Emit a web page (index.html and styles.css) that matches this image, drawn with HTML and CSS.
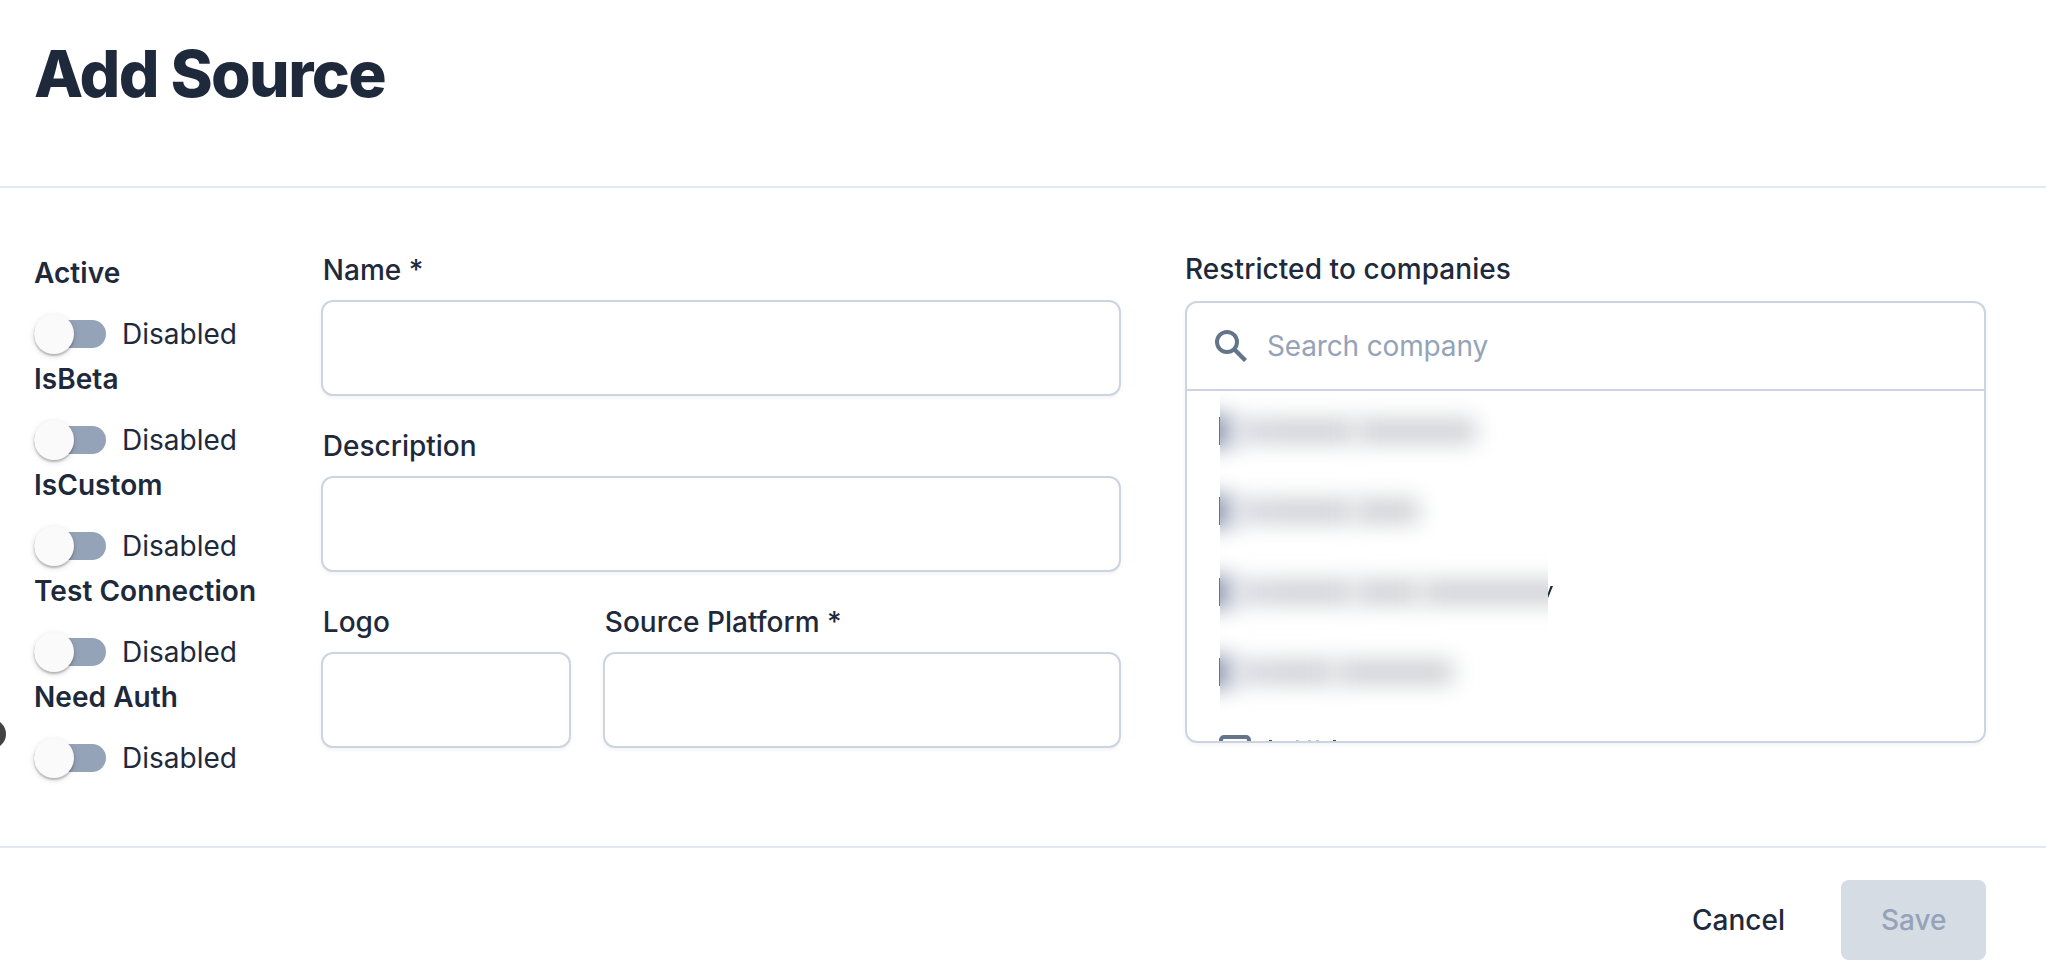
FILE: index.html
```
<!DOCTYPE html>
<html lang="en">
<head>
<meta charset="utf-8">
<title>Add Source</title>
<link rel="stylesheet" href="styles.css">
</head>
<body>
<div class="page">
  <header class="header"><h1 class="title">Add Source</h1></header>
  <main class="main">
    <section class="toggles">
      <div class="toggle-group"><div class="toggle-title">Active</div><div class="toggle"><span class="track"><span class="thumb"></span></span><span class="state">Disabled</span></div></div>
      <div class="toggle-group"><div class="toggle-title">IsBeta</div><div class="toggle"><span class="track"><span class="thumb"></span></span><span class="state">Disabled</span></div></div>
      <div class="toggle-group"><div class="toggle-title">IsCustom</div><div class="toggle"><span class="track"><span class="thumb"></span></span><span class="state">Disabled</span></div></div>
      <div class="toggle-group"><div class="toggle-title">Test Connection</div><div class="toggle"><span class="track"><span class="thumb"></span></span><span class="state">Disabled</span></div></div>
      <div class="toggle-group"><div class="toggle-title">Need Auth</div><div class="toggle"><span class="track"><span class="thumb"></span></span><span class="state">Disabled</span></div></div>
    </section>
    <section class="fields">
      <label class="field field-wide"><span class="label">Name *</span><input class="input" type="text"></label>
      <label class="field field-wide"><span class="label">Description</span><input class="input" type="text"></label>
      <label class="field"><span class="label">Logo</span><input class="input" type="text"></label>
      <label class="field"><span class="label">Source Platform *</span><input class="input" type="text"></label>
    </section>
    <section class="companies">
      <div class="companies-label">Restricted to companies</div>
      <div class="picker">
        <div class="search">
          <svg class="search-icon" viewBox="0 0 32 32"><circle cx="12" cy="12" r="10" fill="none" stroke="#64748b" stroke-width="4"/><path d="M20 20L30.500 30.500" stroke="#64748b" stroke-width="4.400"/></svg>
          <span class="placeholder">Search company</span>
        </div>
        <div class="list">
          <div class="row"><span class="edge"></span><span class="veil"><i class="box"></i><i class="word w1"></i><i class="word w2"></i></span></div>
          <div class="row"><span class="edge"></span><span class="veil"><i class="box"></i><i class="word w3"></i><i class="word w4"></i></span></div>
          <div class="row"><span class="edge"></span><span class="veil"><i class="box"></i><i class="word w3"></i><i class="word w4"></i><i class="word w5"></i></span><svg class="tail" viewBox="0 0 5 12"><path d="M0 7L2.500 0H5L0 12Z" fill="#1e293b"/></svg></div>
          <div class="row"><span class="edge"></span><span class="veil"><i class="box"></i><i class="word w6"></i><i class="word w7"></i></span></div>
          <div class="row row-cut"><span class="checkbox"></span><svg class="tops" viewBox="0 0 70 1"><path d="M2 0h3v1h-3zM66 0h3v1h-3z" fill="#3f485a"/><path d="M29 0h3v1h-3zM41 0h3v1h-3zM49 0h3v1h-3z" fill="#c0c3c9"/></svg></div>
        </div>
      </div>
    </section>
  </main>
  <footer class="footer"><button class="cancel">Cancel</button><button class="save">Save</button></footer>
  <span class="side-knob"></span>
</div>
</body>
</html>
```
FILE: styles.css
```
* { box-sizing: border-box; }
body { margin: 0; background: #fff; color: #1e293b; font-family: Inter, sans-serif; font-size: 28px; }
.page { position: relative; display: flex; flex-direction: column; height: 968px; overflow: hidden; }
.header { height: 188px; padding: 42px 34px 0; border-bottom: 2px solid #e2e8f0; }
.title { margin: 0; font-size: 64px; line-height: 64px; font-weight: 800; letter-spacing: -1.6px; }
.main { display: flex; height: 660px; padding: 0 60px 0 34px; border-bottom: 2px solid #e2e8f0; }
.toggles { width: 287px; padding-top: 61px; }
.toggle-group { height: 106px; }
.toggle-title { height: 48px; line-height: 48px; font-weight: 600; letter-spacing: 0.05px; }
.toggle { display: flex; align-items: center; gap: 16px; height: 74px; }
.track { width: 72px; height: 28px; border-radius: 14px; background: #94a3b8; }
.thumb { display: block; width: 40px; height: 40px; margin-top: -6px; border-radius: 50%; background: #fafafa; box-shadow: 0 2px 2px rgba(0,0,0,.22), 0 2px 6px rgba(0,0,0,.14); }
.state { line-height: 40px; }
.fields { display: grid; grid-template-columns: 250px 518px; column-gap: 32px; row-gap: 32px; align-content: start; width: 800px; padding-top: 64px; }
.field { display: flex; flex-direction: column; height: 144px; }
.field-wide { grid-column: span 2; }
.label { height: 48px; padding-left: 1.8px; line-height: 36px; font-weight: 500; }
.input { width: 100%; height: 96px; border: 2px solid #cbd5e1; border-radius: 12px; background: #fff; box-shadow: 0 2px 4px rgba(0,0,0,.05); }
.companies { width: 801px; margin-left: 64px; padding-top: 63px; }
.companies-label { height: 50px; line-height: 36px; font-weight: 500; letter-spacing: 0.08px; }
.picker { height: 442px; border: 2px solid #cbd5e1; border-radius: 12px; overflow: hidden; box-shadow: 0 2px 4px rgba(0,0,0,.05); }
.search { display: flex; align-items: center; gap: 20px; height: 88px; padding-left: 28px; border-bottom: 2px solid #cbd5e1; }
.search-icon { width: 32px; height: 32px; }
.placeholder { color: #94a3b8; letter-spacing: -0.15px; }
.list { padding-left: 32px; }
.row { display: flex; align-items: center; height: 80.300px; }
.edge { width: 1px; height: 28px; background: #64748b; }
.veil { display: flex; align-items: center; width: 328px; height: 80px; overflow: hidden; }
.box { flex: none; width: 40px; height: 32px; margin-left: -24px; background: linear-gradient(90deg, #8490a7 28px, #c3cad5 34px); filter: blur(11px); }
.word { flex: none; height: 24px; margin-left: 3px; background: #cdcfd3; filter: blur(11px); }
.box + .word { margin-left: 0; background: linear-gradient(90deg, #d3d7de, #cdcfd3 50px); }
.w1 { width: 118px; }
.w2 { width: 119px; }
.w3 { width: 116px; }
.w4 { width: 64px; }
.w5 { width: 150px; }
.w6 { width: 98px; }
.w7 { width: 116px; }
.tail { width: 5px; height: 12px; }
.row-cut { align-items: flex-start; gap: 16px; padding-top: 23px; }
.checkbox { width: 32px; height: 32px; border: 4px solid #64748b; border-radius: 5px; }
.tops { width: 70px; height: 1px; margin-top: 5px; }
.footer { display: flex; justify-content: flex-end; height: 120px; padding: 32px 60px 0 0; gap: 16px; }
.cancel, .save { height: 80px; padding: 0 40px; border: 0; border-radius: 8px; background: none; color: #1e293b; font: 500 28px Inter, sans-serif; }
.save { width: 145px; background: #d6dce4; color: #94a3b8; }
.side-knob { position: absolute; left: -24px; top: 719px; width: 30px; height: 30px; border-radius: 50%; background: #424242; }
```
